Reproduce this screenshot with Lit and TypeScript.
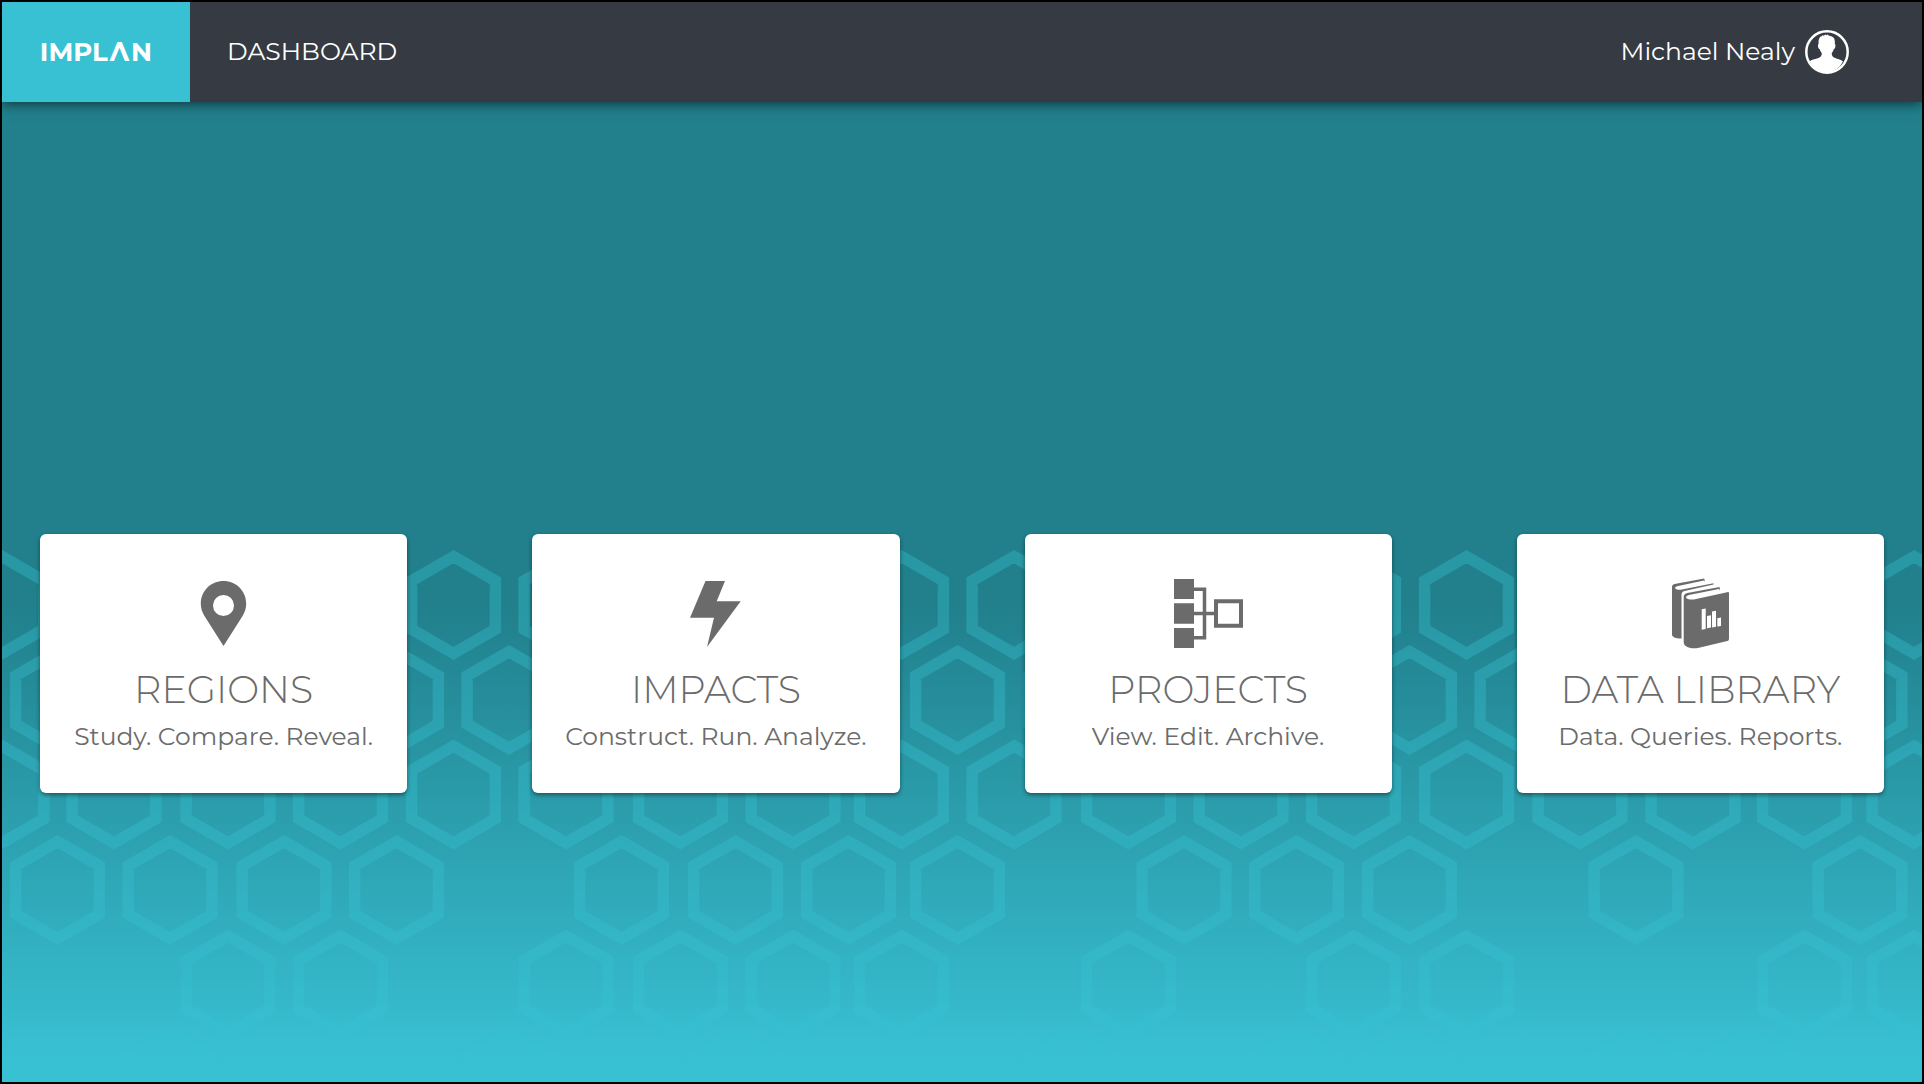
import { LitElement, html, css, svg } from "lit";
import { customElement, property } from "lit/decorators.js";

type IconName = "pin" | "bolt" | "tree" | "books";

interface Tile {
  icon: IconName;
  title: string;
  text: string;
  href: string;
}

const TILES: Tile[] = [
  { icon: "pin", title: "REGIONS", text: "Study. Compare. Reveal.", href: "#regions" },
  { icon: "bolt", title: "IMPACTS", text: "Construct. Run. Analyze.", href: "#impacts" },
  { icon: "tree", title: "PROJECTS", text: "View. Edit. Archive.", href: "#projects" },
  { icon: "books", title: "DATA LIBRARY", text: "Data. Queries. Reports.", href: "#library" },
];

const ICONS = {
  pin: svg`<path fill-rule="evenodd" d="M35.500 4C22.900 4 12.800 14 12.800 26.600c0 4.600 1.200 8.400 3.500 12.100L35.500 69l19.200-30.300c2.300-3.700 3.500-7.500 3.500-12.100C58.200 14 48.100 4 35.500 4Zm0 14a10.500 10.500 0 1 1 0 21 10.500 10.500 0 0 1 0-21Z"/>`,
  bolt: svg`<path d="M25.500 4H45l-8.300 20.200h24L27 70l7-29.300H10Z"/>`,
  tree: svg`
    <path d="M2 2h20v20H2zM2 26.300h20v20.400H2zM2 51h20v20H2z"/>
    <path fill="none" stroke="currentColor" stroke-width="3.500" d="M22 12.200h10.500v48.500H22M22 36.500h21"/>
    <path fill="none" stroke="currentColor" stroke-width="4" d="M44 24.200h25v24.500H44z"/>`,
  books: svg`<g transform="translate(1 0)">
    <path d="M7 10.500c0-2 .8-3 2.600-3.400L39.200 1.400l.8 3.400-1-1.200L12 9.200c-2.300.6-2.600 2.400-.6 3 1.800.6 3.600.7 5.600.2L48.500 6.200v1.200L19.500 14c-2.200.6-3 1.700-3 4v43.500C10.500 61.500 7 60 7 57.500Z"/>
    <path fill-rule="evenodd" d="M18.700 20c0-2.200 1.300-3.600 3.700-4.100L54.500 10l.5 3.600-1.200-1.700L24 18c-3.600.8-4 3.400-.4 4.200 2.400.5 5 .4 7.500-.2L62.200 15.200c1.200-.3 1.800.1 1.800 1.300v45.300c0 1.200-.5 1.900-1.700 2.200L34 70.700c-8.500 1.700-15.300-.7-15.300-5.700ZM36.700 32.200v20.500l4-.7V31.500ZM42 39v12.300l4-.7V38.300ZM47 34.500v16l4-.7V33.800ZM52.300 41.300v8.300l3.700-.6v-8.400Z"/></g>`,
};

/* Honeycomb: cell centres per row, y is the row's centre line. */
const ROW_A = [2, 114, 228, 340.5, 453.5, 566, 680.5, 793, 901.5, 1014, 1128.5, 1241, 1353.5, 1466.5, 1580, 1693, 1804.5, 1914];
const ROW_B = [57.5, 170, 284, 396.5, 509, 621.5, 735.5, 848.5, 957.5, 1071, 1184, 1296.5, 1409.5, 1522, 1636, 1748, 1860];
const ROWS: { y: number; xs: number[] }[] = [
  { y: 605, xs: ROW_A },
  { y: 700, xs: ROW_B },
  { y: 794.5, xs: ROW_A },
  { y: 890, xs: [57.5, 170, 284, 396.5, 621.5, 735.5, 848.5, 957.5, 1184, 1296.5, 1409.5, 1636, 1860] },
  { y: 984.5, xs: [228, 340.5, 566, 680.5, 793, 901.5, 1128.5, 1353.5, 1466.5, 1804.5, 1914] },
  { y: 1080.5, xs: [170, 509, 735.5, 1071, 1296.5, 1409.5, 1636, 1748] },
];

const hexagon = (cx: number, cy: number) => {
  const r = 48.4;
  const w = 41.9;
  return `M${cx} ${cy - r}l${w} ${r / 2}v${r}l${-w} ${r / 2}l${-w} ${-r / 2}v${-r}Z`;
};

@customElement("honeycomb-backdrop")
export class HoneycombBackdrop extends LitElement {
  static styles = css`
    :host {
      display: block;
      overflow: hidden;
      background: linear-gradient(#21808c 56%, #38c1d3 98%);
    }
    .cells {
      display: block;
      width: 100%;
      height: 100%;
      fill: none;
      stroke: #38c2d4;
      stroke-width: 11.5;
      stroke-opacity: 0.36;
    }
  `;

  render() {
    const d = ROWS.map((row) => row.xs.map((x) => hexagon(x, row.y)).join("")).join("");
    return html`
      <svg class="cells" viewBox="2 2 1920 1080" preserveAspectRatio="xMidYMax slice" aria-hidden="true">
        <path d=${d}></path>
      </svg>
    `;
  }
}

@customElement("dashboard-tile")
export class DashboardTile extends LitElement {
  @property({ attribute: false }) tile!: Tile;

  static styles = css`
    :host {
      display: grid;
    }
    .tile {
      display: flex;
      flex-direction: column;
      align-items: center;
      padding: 43px 8px 41px;
      border-radius: 6px;
      background: #fff;
      box-shadow: 0 2px 4px rgba(0, 0, 0, 0.45);
      color: #6b6b6b;
      text-align: center;
      text-decoration: none;
    }
    .icon {
      width: 72px;
      height: 72px;
      fill: currentColor;
    }
    .title {
      margin: 18px 0 7px;
      font-size: 38px;
      line-height: 46px;
      font-weight: 300;
    }
    .text {
      margin: 0;
      font-size: 25px;
      line-height: 32px;
      font-weight: 400;
    }
  `;

  render() {
    const { icon, title, text, href } = this.tile;
    return html`
      <a class="tile" href=${href}>
        <svg class="icon" viewBox="0 0 72 72" aria-hidden="true">${ICONS[icon]}</svg>
        <h2 class="title">${title}</h2>
        <p class="text">${text}</p>
      </a>
    `;
  }
}

@customElement("app-root")
export class AppRoot extends LitElement {
  static styles = css`
    :host {
      display: block;
      font-family: Montserrat, Inter, "Open Sans", sans-serif;
    }
    .page {
      position: relative;
      box-sizing: border-box;
      display: flex;
      flex-direction: column;
      min-height: 100vh;
      border: 2px solid #000;
    }
    .backdrop {
      position: absolute;
      inset: 0;
    }
    .bar {
      position: relative;
      display: flex;
      align-items: stretch;
      height: 100px;
      background: #363a42;
      box-shadow: 0 2px 12px rgba(0, 0, 0, 0.6);
      color: #fff;
    }
    .logo {
      display: flex;
      align-items: center;
      justify-content: center;
      gap: 2px;
      width: 188px;
      background: #38c1d3;
      color: #fff;
      font-size: 26px;
      line-height: 32px;
      font-weight: 700;
      text-decoration: none;
    }
    .section {
      margin: 0;
      padding: 0 0 2px 37px;
      align-self: center;
      font-size: 25px;
      line-height: 32px;
      font-weight: 400;
    }
    .user {
      display: flex;
      align-items: center;
      gap: 10px;
      margin-left: auto;
      padding: 0 73px 0 16px;
      border: 0;
      background: none;
      color: inherit;
      font: inherit;
      font-size: 25px;
      line-height: 32px;
      cursor: pointer;
    }
    .name {
      padding-bottom: 2px;
    }
    .avatar {
      width: 44px;
      height: 44px;
    }
    .tiles {
      position: relative;
      display: grid;
      grid-template-columns: repeat(4, minmax(0, 1fr));
      gap: 125px;
      padding: 432px 38px 40px;
    }
  `;

  render() {
    return html`
      <div class="page">
        <honeycomb-backdrop class="backdrop"></honeycomb-backdrop>
        <header class="bar">
          <a class="logo" href="#home"><span>IMPL</span><span>Λ</span><span>N</span></a>
          <h1 class="section">DASHBOARD</h1>
          <button class="user" type="button">
            <span class="name">Michael Nealy</span>
            <svg class="avatar" viewBox="0 0 44 44" aria-hidden="true">
              <circle cx="22" cy="22" r="20.700" fill="none" stroke="#fff" stroke-width="2.500" />
              <path
                fill="#fff"
                d="M4.500 31.500c2.500-2.300 7-2.600 10-4 1.600-.8 2.300-2.200 2.300-4.500-1-1-1.600-2.200-2-3.800-1.300-.3-2-2.200-1.800-4.700l.6-.4c-.3-3 .2-6 1.900-7.500l1.400-.4.500-1.200.9.700 1.200-.5.700-.6 1.300.6.900-1 .6 1.200 1-.5.500 1 1.800.3.900.6c2.300 1 3 3.500 2.600 7.300l.6.4c.3 2.500-.5 4.400-1.700 4.700-.4 1.600-1 2.800-2 3.800 0 2.300.7 3.700 2.300 4.500 3 1.400 6.500 1.700 9 4A20 20 0 0 1 22 42.500 20 20 0 0 1 4.500 31.500Z"
              />
            </svg>
          </button>
        </header>
        <main class="tiles">
          ${TILES.map((tile) => html`<dashboard-tile .tile=${tile}></dashboard-tile>`)}
        </main>
      </div>
    `;
  }
}
